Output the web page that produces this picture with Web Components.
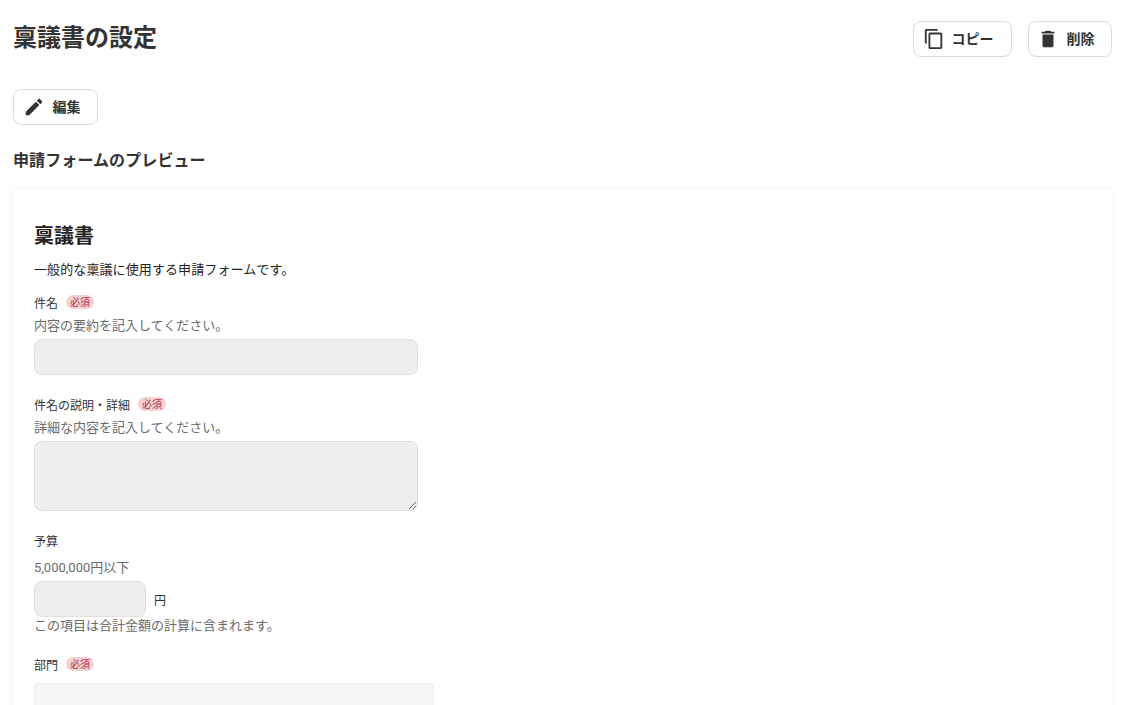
<!DOCTYPE html>
<html lang="ja">
<head>
<meta charset="utf-8">
<title>稟議書の設定</title>
<style>
  html, body { margin: 0; height: 705px; overflow: hidden; background: #fff; }
  body { font-family: "Roboto", "Noto Sans CJK JP", sans-serif; color: #333; }
</style>
</head>
<body>
<settings-page>
  <action-button slot="actions" width="99" pad="8.5" gap="7">
    <svg slot="icon" viewBox="0 0 24 24" width="22" height="22"><path fill="#333" d="M16 1H4c-1.1 0-2 .9-2 2v14h2V3h12V1zm3 4H8c-1.1 0-2 .9-2 2v14c0 1.1.9 2 2 2h11c1.1 0 2-.9 2-2V7c0-1.100-.9-2-2-2zm0 16H8V7h11v14z"/></svg>
    コピー
  </action-button>
  <action-button slot="actions" width="84" pad="7.5" gap="8">
    <svg slot="icon" viewBox="0 0 24 24" width="22" height="22"><path fill="#333" d="M6 19c0 1.100.9 2 2 2h8c1.100 0 2-.9 2-2V7H6v12zM19 4h-3.500l-1-1h-5l-1 1H5v2h14V4z"/></svg>
    削除
  </action-button>
  <action-button slot="edit" width="85" pad="8.5" gap="8">
    <svg slot="icon" viewBox="0 0 24 24" width="22" height="22"><path fill="#333" d="M3 17.250V21h3.750L17.810 9.940l-3.750-3.750L3 17.250zM20.710 7.040a1 1 0 0 0 0-1.410l-2.340-2.340a1 1 0 0 0-1.410 0l-1.830 1.830 3.750 3.750 1.830-1.830z"/></svg>
    編集
  </action-button>
  <preview-card heading="稟議書" description="一般的な稟議に使用する申請フォームです。">
    <form-field label="件名" required hint="内容の要約を記入してください。">
      <text-box></text-box>
    </form-field>
    <form-field label="件名の説明・詳細" required hint="詳細な内容を記入してください。" style="--field-top:19px">
      <text-box multiline></text-box>
    </form-field>
    <form-field label="予算" hint="5,000,000円以下" note="この項目は合計金額の計算に含まれます。" style="--field-top:19px;--hint-top:8px">
      <text-box width="112" unit="円"></text-box>
    </form-field>
    <form-field label="部門" required style="--field-top:18px;--control-top:9px">
      <select-box></select-box>
    </form-field>
  </preview-card>
</settings-page>

<script>
class SettingsPage extends HTMLElement {
  constructor() {
    super();
    this.attachShadow({ mode: "open" });
    this.shadowRoot.innerHTML = `
      <style>
        :host { display: block; padding: 21px 17px 0 13px; }
        header { display: flex; justify-content: space-between; align-items: center; height: 36px; }
        h1 { margin: 0; font-size: 24px; line-height: 36px; font-weight: 700; color: #333; position: relative; top: -1px; }
        .actions { display: flex; gap: 16px; }
        .edit { margin-top: 32px; display: flex; }
        h2 { margin: 24px 0 17px; font-size: 16px; line-height: 24px; font-weight: 700; color: #333; letter-spacing: .1px; }
      </style>
      <header>
        <h1>稟議書の設定</h1>
        <div class="actions"><slot name="actions"></slot></div>
      </header>
      <div class="edit"><slot name="edit"></slot></div>
      <h2>申請フォームのプレビュー</h2>
      <slot></slot>
    `;
  }
}

class ActionButton extends HTMLElement {
  constructor() {
    super();
    this.attachShadow({ mode: "open" });
    const width = this.getAttribute("width") || "85";
    const pad = this.getAttribute("pad") || "9";
    const gap = this.getAttribute("gap") || "7";
    this.shadowRoot.innerHTML = `
      <style>
        :host { display: inline-block; }
        button {
          box-sizing: border-box; width: ${width}px; height: 36px; padding: 0 0 0 ${pad}px;
          display: flex; align-items: center; gap: ${gap}px;
          background: #fff; border: 1px solid #dcdcdc; border-radius: 8px;
          font: 700 14px/20px "Roboto", "Noto Sans CJK JP", sans-serif; color: #333;
        }
        ::slotted(svg) { display: block; flex: none; }
      </style>
      <button type="button"><slot name="icon"></slot><span><slot></slot></span></button>
    `;
  }
}

class PreviewCard extends HTMLElement {
  constructor() {
    super();
    this.attachShadow({ mode: "open" });
    this.shadowRoot.innerHTML = `
      <style>
        :host { display: block; background: #fff; border-radius: 4px; padding: 31px 21px 40px;
          box-shadow: 0 0 10px rgba(0,0,0,.06); }
        h3 { margin: 0; font-size: 20px; line-height: 30px; font-weight: 700; color: #222; }
        p { margin: 9px 0 0; font-size: 13px; line-height: 20px; color: #222; letter-spacing: .1px; }
      </style>
      <h3>${this.getAttribute("heading")}</h3>
      <p>${this.getAttribute("description")}</p>
      <slot></slot>
    `;
  }
}

class RequiredBadge extends HTMLElement {
  constructor() {
    super();
    this.attachShadow({ mode: "open" });
    this.shadowRoot.innerHTML = `
      <style>
        :host { display: inline-block; box-sizing: border-box; width: 28px; height: 14px; border-radius: 7px;
          background: #f5d0d6; color: #a8324a; font-size: 10px; line-height: 15px; text-align: center; position: relative; top: -.5px; }
      </style>
      必須
    `;
  }
}
customElements.define("required-badge", RequiredBadge);

class FormField extends HTMLElement {
  constructor() {
    super();
    this.attachShadow({ mode: "open" });
    const hint = this.getAttribute("hint");
    const note = this.getAttribute("note");
    this.shadowRoot.innerHTML = `
      <style>
        :host { display: block; margin-top: var(--field-top, 12px); }
        .label { display: flex; align-items: center; gap: 8px; height: 20px; font-size: 12px; color: #333; }
        .hint, .note { font-size: 13px; line-height: 20px; color: #6b6b6b; }
        .hint { margin-top: var(--hint-top, 4px); margin-bottom: 3px; }
        .control { margin-top: var(--control-top, 0); }
        .note { margin-top: -1px; }
      </style>
      <div class="label"><span>${this.getAttribute("label")}</span>${this.hasAttribute("required") ? "<required-badge></required-badge>" : ""}</div>
      ${hint ? `<div class="hint">${hint}</div>` : ""}
      <div class="control"><slot></slot></div>
      ${note ? `<div class="note">${note}</div>` : ""}
    `;
  }
}

class TextBox extends HTMLElement {
  constructor() {
    super();
    this.attachShadow({ mode: "open" });
    const width = this.getAttribute("width") || "384";
    const unit = this.getAttribute("unit");
    const box = this.hasAttribute("multiline") ? `<textarea disabled></textarea>` : `<input type="text" disabled>`;
    this.shadowRoot.innerHTML = `
      <style>
        :host { display: flex; align-items: center; gap: 8px; }
        input, textarea {
          display: block; box-sizing: border-box; width: ${width}px; margin: 0; padding: 6px 10px;
          background: #efeeec; border: 1px solid #e2dfda; border-radius: 8px; outline: none;
          font: 13px "Roboto", "Noto Sans CJK JP", sans-serif;
        }
        input { height: 36px; }
        textarea { height: 70px; resize: vertical; border-color: #dedddb; }
        span { font-size: 12px; color: #333; }
      </style>
      ${box}${unit ? `<span>${unit}</span>` : ""}
    `;
  }
}

class SelectBox extends HTMLElement {
  constructor() {
    super();
    this.attachShadow({ mode: "open" });
    this.shadowRoot.innerHTML = `
      <style>
        :host { display: block; width: 400px; height: 36px; box-sizing: border-box;
          background: #f6f6f5; border: 1px solid #eeeeee; border-radius: 4px; }
      </style>
    `;
  }
}

customElements.define("settings-page", SettingsPage);
customElements.define("action-button", ActionButton);
customElements.define("preview-card", PreviewCard);
customElements.define("form-field", FormField);
customElements.define("text-box", TextBox);
customElements.define("select-box", SelectBox);
</script>
</body>
</html>
